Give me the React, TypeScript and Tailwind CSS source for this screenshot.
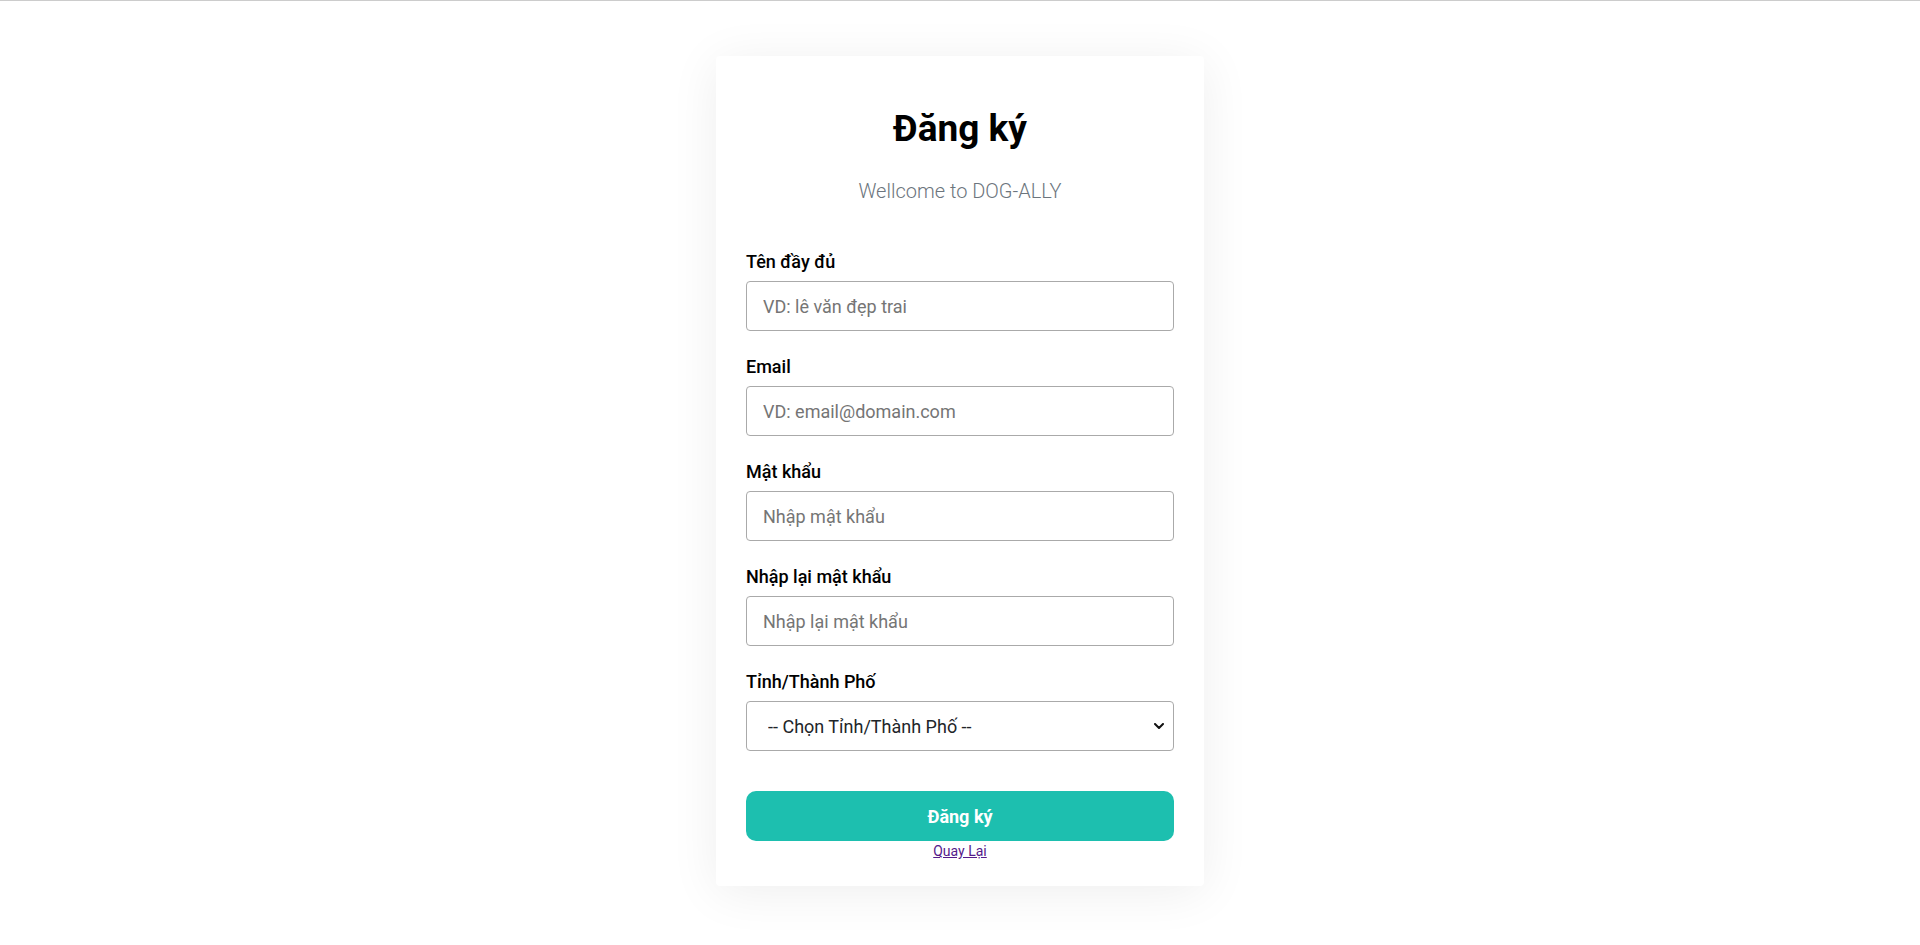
import React from "react";

type Field = {
  label: string;
  type: string;
  placeholder: string;
};

const fields: Field[] = [
  { label: "Tên đầy đủ", type: "text", placeholder: "VD: lê văn đẹp trai" },
  { label: "Email", type: "email", placeholder: "VD: email@domain.com" },
  { label: "Mật khẩu", type: "password", placeholder: "Nhập mật khẩu" },
  { label: "Nhập lại mật khẩu", type: "password", placeholder: "Nhập lại mật khẩu" },
];

const provinces = ["Hà Nội", "Hồ Chí Minh", "Đà Nẵng", "Hải Phòng", "Cần Thơ"];

function FormField({ label, type, placeholder }: Field) {
  return (
    <div className="mb-[25px]">
      <label className="mb-2 block text-[18px] leading-[22px] font-medium text-black">{label}</label>
      <input
        type={type}
        placeholder={placeholder}
        className="block h-[50px] w-full rounded-[4px] border border-[#aaaaaa] bg-white px-4 text-[18px] text-[#212529] outline-none placeholder:text-[#757575]"
      />
    </div>
  );
}

export default function App() {
  return (
    <div className="min-h-[3590px] border-t border-[#cccccc] bg-white font-['Roboto','Liberation_Sans',sans-serif]">
      <div className="flex justify-center pt-[55px]">
        <form
          className="w-[488px] rounded-[4px] bg-white px-[30px] pt-[51px] pb-[25px] shadow-[0_6px_50px_rgba(0,0,0,0.07)]"
          onSubmit={(e) => e.preventDefault()}
        >
          <h1 className="text-center text-[37px] leading-[44px] font-bold text-black">Đăng ký</h1>
          <p className="mt-[28px] text-center text-[20px] leading-[24px] font-light text-[#6c757d]">
            Wellcome to DOG-ALLY
          </p>

          <div className="mt-[48px]">
            {fields.map((f) => (
              <FormField key={f.label} {...f} />
            ))}
            <div className="mb-[40px]">
              <label className="mb-2 block text-[18px] leading-[22px] font-medium text-black">Tỉnh/Thành Phố</label>
              <div className="relative">
                <select
                  defaultValue=""
                  className="block h-[50px] w-full appearance-none rounded-[4px] border border-[#aaaaaa] bg-white pr-8 pl-[21px] text-[18px] text-[#212529] outline-none"
                >
                  <option value="">-- Chọn Tỉnh/Thành Phố --</option>
                  {provinces.map((p) => (
                    <option key={p} value={p}>
                      {p}
                    </option>
                  ))}
                </select>
                {/* native-looking chevron */}
                <svg
                  className="pointer-events-none absolute top-1/2 right-[10px] h-[6px] w-[10px] -translate-y-1/2"
                  viewBox="0 0 10 6"
                  fill="none"
                >
                  <path d="M1 1l4 4 4-4" stroke="#111" strokeWidth="2" strokeLinecap="round" strokeLinejoin="round" />
                </svg>
              </div>
            </div>
          </div>

          <button
            type="submit"
            className="block h-[50px] w-full rounded-[10px] bg-[#1dbfaf] text-[18px] font-bold text-white"
          >
            Đăng ký
          </button>
          <div className="text-center text-[14px] leading-[20px]">
            <a href="#" className="text-[#551a8b] underline">
              Quay Lại
            </a>
          </div>
        </form>
      </div>
    </div>
  );
}
